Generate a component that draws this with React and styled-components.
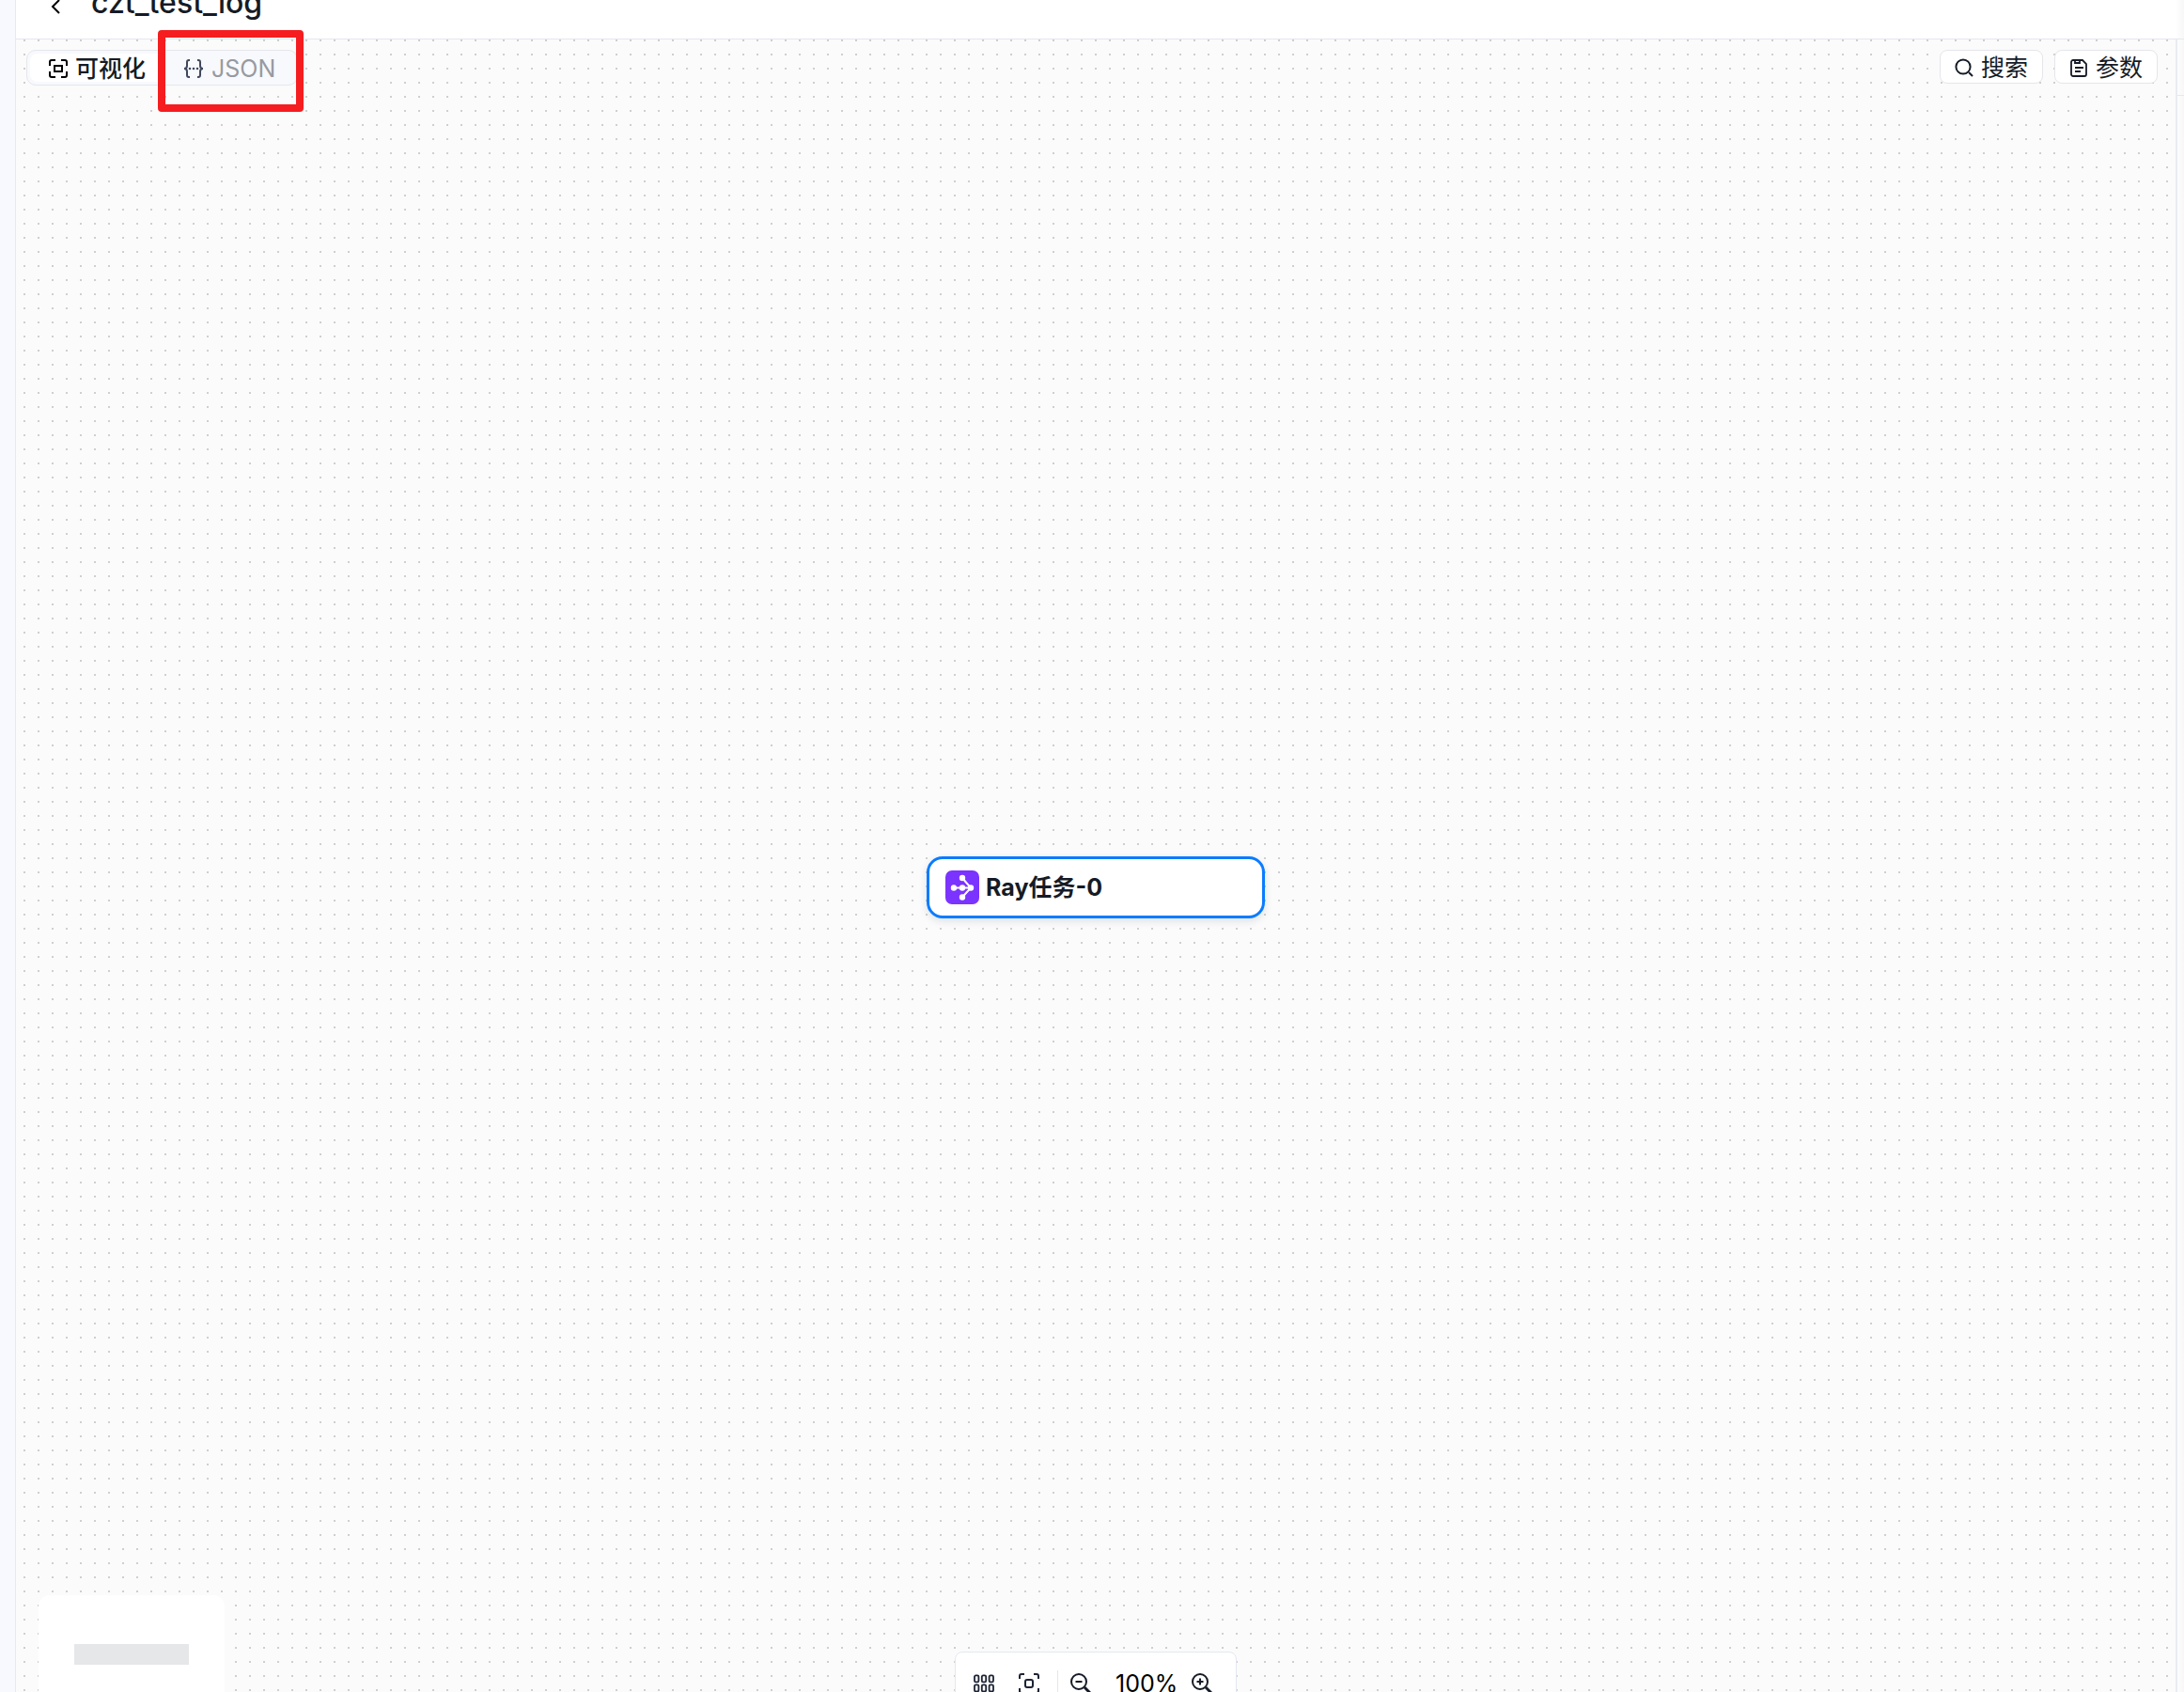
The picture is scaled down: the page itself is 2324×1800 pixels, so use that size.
import styled, { createGlobalStyle } from 'styled-components'

const App = () => {
    return (
        <>
            <GlobalStyle />
            <Page>
                <Rail />
                <Main>
                    <Header>
                        <BackButton aria-label='返回'><BackIcon /></BackButton>
                        <Title>czt_test_log</Title>
                    </Header>
                    <Canvas>
                        <TopBar>
                            <Tabs>
                                <Tab $active><VisualIcon />可视化</Tab>
                                <Tab><JsonIcon />JSON</Tab>
                                <Highlight />
                            </Tabs>
                            <Actions>
                                <ActionButton><SearchIcon />搜索</ActionButton>
                                <ActionButton><ParamsIcon />参数</ActionButton>
                            </Actions>
                        </TopBar>
                        <TaskNode>
                            <RayIcon />
                            Ray任务-0
                        </TaskNode>
                        <MiniMap><MiniNode /></MiniMap>
                        <ZoomBar>
                            <IconButton aria-label='布局'><GridIcon /></IconButton>
                            <IconButton aria-label='适应画布'><FitIcon /></IconButton>
                            <Divider />
                            <IconButton aria-label='缩小'><ZoomIcon /></IconButton>
                            <ZoomValue>100%</ZoomValue>
                            <IconButton aria-label='放大'><ZoomIcon plus /></IconButton>
                        </ZoomBar>
                    </Canvas>
                </Main>
                <SidePanel><SidePanelHead /><SidePanelBody><SidePanelTabs /></SidePanelBody></SidePanel>
            </Page>
        </>
    )
}

export default App

const BackIcon = () => (
    <svg width='20' height='20' viewBox='0 0 20 20' fill='none' stroke='#000' strokeWidth='2'>
        <path d='M14 3L7 10l7 7' />
    </svg>
)

const VisualIcon = () => (
    <svg width='20' height='20' viewBox='0 0 20 20' fill='none' stroke='#000' strokeWidth='2'>
        <path d='M1 7V3a2 2 0 0 1 2-2h4M13 1h4a2 2 0 0 1 2 2v4M19 13v4a2 2 0 0 1-2 2h-4M7 19H3a2 2 0 0 1-2-2v-4' />
        <rect x='6' y='7' width='8' height='6' />
    </svg>
)

const JsonIcon = () => (
    <svg width='22' height='20' viewBox='0 0 22 20' fill='none' stroke='#40485c' strokeWidth='2'>
        <path d='M7 1H6a2 2 0 0 0-2 2v4c0 2-1 3-3 3 2 0 3 1 3 3v4a2 2 0 0 0 2 2h1M15 1h1a2 2 0 0 1 2 2v4c0 2 1 3 3 3-2 0-3 1-3 3v4a2 2 0 0 1-2 2h-1' />
        <path d='M7 10h0M11 10h0M15 10h0' strokeWidth='2.6' strokeLinecap='round' />
    </svg>
)

const SearchIcon = () => (
    <svg width='20' height='20' viewBox='0 0 20 20' fill='none' stroke='#151b26' strokeWidth='2'>
        <circle cx='9' cy='9' r='7.6' />
        <path d='M15 15l4 4' />
    </svg>
)

const ParamsIcon = () => (
    <svg width='20' height='20' viewBox='0 0 20 20' fill='none' stroke='#151b26' strokeWidth='1.8'>
        <path d='M4 2h10l4 4v11a2 2 0 0 1-2 2H4a2 2 0 0 1-2-2V4a2 2 0 0 1 2-2z' />
        <path d='M6 2v3h5V2M6 10h9M6 14h6' />
    </svg>
)

const RayIcon = () => (
    <svg width='36' height='36' viewBox='0 0 36 36'>
        <rect width='36' height='36' rx='7' fill='#7b33ff' />
        <g stroke='#fff' strokeWidth='2'>
            <path d='M9 18.5h18M18 8l9 10.5-9 10' fill='none' />
        </g>
        <g fill='#fff'>
            <circle cx='9' cy='18.5' r='3.2' />
            <circle cx='18' cy='18.5' r='3.2' />
            <circle cx='27' cy='18.5' r='3.2' />
            <circle cx='18' cy='8' r='3.2' />
            <circle cx='18' cy='28.5' r='3.2' />
        </g>
    </svg>
)

const GridIcon = () => (
    <svg width='22' height='20' viewBox='0 0 22 20' fill='none' stroke='#1c2333' strokeWidth='1.8'>
        {[1, 8.8, 16.6].map(x => [1.4, 11.4].map(y => (
            <rect key={`${x}-${y}`} x={x} y={y} width='4.4' height='7' rx='1.4' />
        )))}
    </svg>
)

const FitIcon = () => (
    <svg width='22' height='22' viewBox='0 0 22 22' fill='none' stroke='#1c2333' strokeWidth='2'>
        <path d='M1 6V3a2 2 0 0 1 2-2h3M16 1h3a2 2 0 0 1 2 2v3M21 16v3a2 2 0 0 1-2 2h-3M6 21H3a2 2 0 0 1-2-2v-3' />
        <rect x='7' y='7' width='8' height='8' rx='2' />
    </svg>
)

const ZoomIcon = ({ plus }) => (
    <svg width='22' height='22' viewBox='0 0 22 22' fill='none' stroke='#151b26' strokeWidth='2'>
        <circle cx='9' cy='9' r='8' />
        <path d='M5.5 9h7' />
        {plus && <path d='M9 5.5v7' />}
        <path d='M15 15l6 6' strokeWidth='3' />
    </svg>
)

const GlobalStyle = createGlobalStyle`
  * {
    box-sizing: border-box;
  }

  body {
    margin: 0;
    font-family: Inter, "Noto Sans CJK SC", sans-serif;
    color: #151b26;
  }

  button {
    padding: 0;
    border: 0;
    background: none;
    font: inherit;
    color: inherit;
    cursor: pointer;
  }

  svg {
    flex: none;
    display: block;
  }
`

const Page = styled.div`
  display: flex;
  height: 100vh;
  overflow: hidden;
`

const Rail = styled.aside`
  width: 17px;
  flex: none;
  background: #f7f9fe;
  border-right: 1px solid #e4eaf5;
`

const Main = styled.main`
  flex: 1;
  min-width: 0;
  display: flex;
  flex-direction: column;
`

const Header = styled.header`
  height: 42px;
  flex: none;
  display: flex;
  align-items: flex-end;
  gap: 28px;
  padding: 0 32px 20px;
  background: #fff;
  border-bottom: 1px solid #e4e8f0;
`

const BackButton = styled.button`
  height: 28px;
  flex: none;
`

const Title = styled.h1`
  margin: 0;
  font-size: 32px;
  line-height: 36px;
  font-weight: 500;
`

const Canvas = styled.section`
  position: relative;
  flex: 1;
  min-height: 0;
  background-color: #fbfbfb;
  background-image: radial-gradient(circle at 9px 1px, #cfcfcf 1px, transparent 1px);
  background-size: 15px 15px;
`

const TopBar = styled.div`
  display: flex;
  justify-content: space-between;
  align-items: flex-start;
  padding: 11px 19px 0 11px;
`

const Tabs = styled.div`
  position: relative;
  display: flex;
  height: 38px;
  padding: 3px;
  border: 1px solid #e4e6eb;
  border-radius: 10px;
  background: #f7f9fc;
`

const Tab = styled.button`
  && {
    display: flex;
    align-items: center;
    gap: 8px;
    padding: 2px 20px 0;
    border-radius: 8px;
    font-size: 25px;
    line-height: 30px;
    font-weight: ${({ $active }) => $active ? 500 : 400};
    color: ${({ $active }) => $active ? '#151b26' : '#979aa1'};
    background: ${({ $active }) => $active ? '#fff' : 'transparent'};
  }
`

const Highlight = styled.div`
  position: absolute;
  top: -22px;
  right: -7px;
  width: 155px;
  height: 87px;
  border: 8px solid #f51d1f;
  border-radius: 4px;
  pointer-events: none;
`

const Actions = styled.div`
  display: flex;
  gap: 12px;
`

const ActionButton = styled.button`
  && {
    display: flex;
    align-items: center;
    justify-content: center;
    gap: 8px;
    width: 110px;
    height: 36px;
    padding-top: 2px;
    border: 1px solid #e4e6eb;
    border-radius: 8px;
    background: #fff;
    font-size: 25px;
    line-height: 30px;
  }
`

const TaskNode = styled.div`
  position: absolute;
  left: 50%;
  top: 869px;
  display: flex;
  align-items: center;
  gap: 7px;
  width: 360px;
  height: 66px;
  margin-left: -180px;
  padding: 0 17px;
  border: 3px solid #0a7cff;
  border-radius: 17px;
  background: #fff;
  box-shadow: 0 3px 8px rgba(20, 30, 60, 0.12);
  font-size: 25px;
  line-height: 32px;
  font-weight: 700;
`

const MiniMap = styled.div`
  position: absolute;
  left: 24px;
  bottom: -30px;
  width: 198px;
  height: 133px;
  padding: 52px 38px;
  border-radius: 12px;
  background: #fff;
`

const MiniNode = styled.div`
  height: 22px;
  background: #e6e7e9;
`

const ZoomBar = styled.div`
  position: absolute;
  left: 50%;
  bottom: -22px;
  display: flex;
  align-items: center;
  width: 300px;
  height: 65px;
  margin-left: -150px;
  padding: 2px 19px 0;
  border: 1px solid #e4e8f0;
  border-radius: 8px;
  background: #fff;
`

const IconButton = styled.button`
  & + & {
    margin-left: 26px;
  }
`

const Divider = styled.span`
  width: 1px;
  height: 28px;
  margin: 0 13px 0 19px;
  background: #e4e6eb;
`

const ZoomValue = styled.output`
  margin: 0 15px 0 26px;
  font-size: 25px;
  line-height: 32px;
  color: #000;
`

const SidePanel = styled.aside`
  width: 9px;
  flex: none;
  background: linear-gradient(to right, #fff, #f7f7f7);
`

const SidePanelHead = styled.div`
  height: 42px;
  border-bottom: 1px solid #e4e8f0;
`

const SidePanelBody = styled.div`
  height: 100%;
  border-left: 2px solid #e8ebf1;
`

const SidePanelTabs = styled.div`
  height: 60px;
  border-bottom: 1px solid #e4e8f0;
`
